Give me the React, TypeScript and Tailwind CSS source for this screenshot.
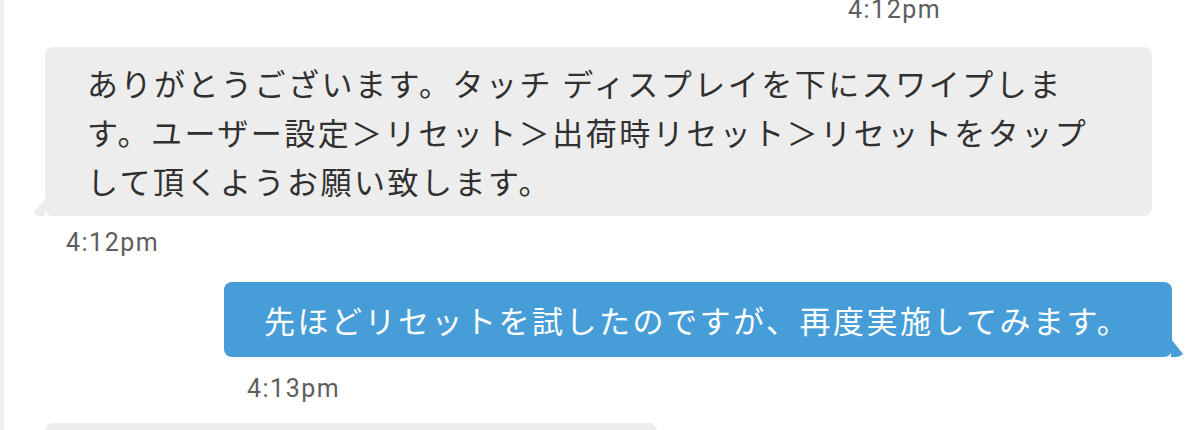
const jp = { fontFamily: '"Noto Sans CJK JP", "Noto Sans", sans-serif' };

const Stamp = ({ time, className }: { time: string; className: string }) => (
  <div className={`font-['Roboto'] text-[25px] leading-[28px] tracking-[1.5px] text-[#5e5e5e] ${className}`}>
    {time}
  </div>
);

export default function App() {
  return (
    <div className="h-[430px] w-[1196px] overflow-hidden bg-white border-l-4 border-[#f0f0f0]">
      <div className="flex flex-col">
        <Stamp time="4:12pm" className="-mt-[4px] ml-[844px]" />

        <div className="relative ml-[41px] mt-[23px] w-[1107px] rounded-lg bg-[#ededed] py-[11px] pl-[42px] pr-[30px]">
          <p style={jp} className="text-[31px] leading-[49px] tracking-[2.5px] text-[#303030]">
            ありがとうございます。タッチ ディスプレイを下にスワイプしま
            <br />
            す。ユーザー設定＞リセット＞出荷時リセット＞リセットをタップ
            <br />
            して頂くようお願い致します。
          </p>
          <svg className="absolute -left-[12px] bottom-0" width="24" height="18" viewBox="0 0 24 18">
            <path d="M12 1 L0 15 Q2 17 6 18 L24 18 L12 18 Z" fill="#ededed" />
          </svg>
        </div>

        <Stamp time="4:12pm" className="ml-[62px] mt-[13px]" />

        <div className="relative ml-[220px] mt-[25px] w-[948px] rounded-lg bg-[#469dd7] py-[13px] pl-[40px]">
          <p style={jp} className="text-[31px] leading-[49px] tracking-[2.5px] text-white">
            先ほどリセットを試したのですが、再度実施してみます。
          </p>
          <svg className="absolute -right-[11px] bottom-0" width="24" height="20" viewBox="0 0 24 20">
            <path d="M12 2 L24 17 Q22 19 18 20 L0 20 L12 20 Z" fill="#469dd7" />
          </svg>
        </div>

        <Stamp time="4:13pm" className="ml-[243px] mt-[18px]" />

        <div className="ml-[41px] mt-[20px] h-[60px] w-[612px] rounded-lg bg-[#ededed]" />
      </div>
    </div>
  );
}
